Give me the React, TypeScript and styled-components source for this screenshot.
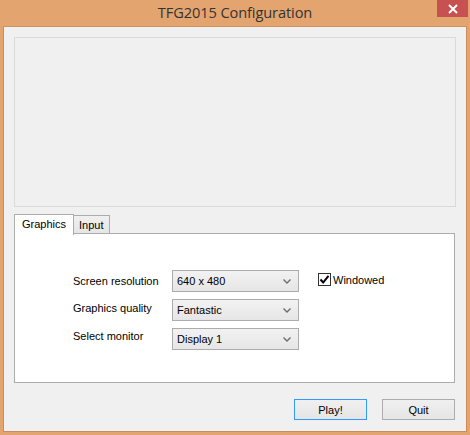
import React from "react";
import styled, { createGlobalStyle } from "styled-components";

const Global = createGlobalStyle`
  html, body { margin: 0; padding: 0; background: #E3A46F; }
  * { box-sizing: border-box; }
`;

const Window = styled.div`
  width: 470px;
  height: 435px;
  background: #E3A46F;
  display: flex;
  flex-direction: column;
  font-family: "Liberation Sans", Arial, sans-serif;
`;

const TitleBar = styled.div`
  height: 26px;
  flex: none;
  display: flex;
  align-items: flex-start;
  justify-content: center;
  position: relative;
`;

const Title = styled.div`
  font-family: "Open Sans", "Noto Sans", sans-serif;
  font-size: 14.6px;
  color: #333333;
  line-height: 22px;
  padding-top: 1px;
  letter-spacing: -0.1px;
`;

const CloseBtn = styled.div`
  position: absolute;
  top: 0;
  right: 2px;
  width: 31px;
  height: 17px;
  background: #C75050;
  display: flex;
  align-items: center;
  justify-content: center;
`;

const Client = styled.div`
  flex: 1;
  margin: 0 3px 3px 3px;
  background: #F0F0F0;
  border: 1px solid #C98C5A;
  border-top-color: #D0925F;
  display: flex;
  flex-direction: column;
  padding: 10px 10px 0 10px;
`;

const Preview = styled.div`
  height: 170px;
  border: 1px solid #DADADA;
  background: #F0F0F0;
  flex: none;
`;

const TabStrip = styled.div`
  margin-top: 6px;
  height: 21px;
  display: flex;
  align-items: flex-end;
  position: relative;
  z-index: 1;
`;

const Tab = styled.div<{ $active?: boolean }>`
  height: ${(p) => (p.$active ? 21 : 19)}px;
  padding: 0 ${(p) => (p.$active ? 7 : 5)}px;
  margin-left: ${(p) => (p.$active ? 0 : -1)}px;
  border: 1px solid #ACACAC;
  border-bottom: ${(p) => (p.$active ? "none" : "1px solid #ACACAC")};
  background: ${(p) => (p.$active ? "#FFFFFF" : "linear-gradient(#F0F0F0, #E5E5E5)")};
  font-size: 11px;
  color: #000;
  display: flex;
  align-items: ${(p) => (p.$active ? "flex-start" : "center")};
  padding-top: ${(p) => (p.$active ? 3 : 1)}px;
  margin-bottom: ${(p) => (p.$active ? -1 : 0)}px;
  position: relative;
  z-index: ${(p) => (p.$active ? 2 : 1)};
`;

const TabPage = styled.div`
  height: 150px;
  width: 441px;
  background: #FFFFFF;
  border: 1px solid #ACACAC;
  margin-top: -1px;
  padding: 36px 0 0 58px;
`;

const FormGrid = styled.div`
  display: grid;
  grid-template-columns: 99px 127px auto;
  grid-auto-rows: 21px;
  row-gap: 8px;
  column-gap: 0;
  align-items: center;
`;

const Label = styled.div<{ $dy?: number }>`
  font-size: 11px;
  color: #000;
  margin-top: ${(p) => p.$dy ?? 0}px;
`;

const Combo = styled.div`
  height: 22px;
  border: 1px solid #ACACAC;
  background: linear-gradient(#F2F2F2, #E6E6E6);
  display: flex;
  align-items: center;
  justify-content: space-between;
  padding: 1px 7px 0 4px;
  font-size: 11px;
  color: #000;
`;

const CheckWrap = styled.label`
  display: flex;
  align-items: center;
  gap: 2px;
  margin-left: 19px;
  font-size: 11px;
  color: #000;
  align-self: start;
  margin-top: 3px;
`;

const Box = styled.div`
  width: 13px;
  height: 13px;
  border: 1px solid #333;
  background: #fff;
  display: flex;
  align-items: center;
  justify-content: center;
`;

const ButtonRow = styled.div`
  margin-top: 16px;
  display: flex;
  justify-content: flex-end;
  gap: 15px;
  padding-right: 1px;
`;

const Button = styled.div<{ $focused?: boolean }>`
  width: 73px;
  height: 21px;
  border: 1px solid ${(p) => (p.$focused ? "#3399FF" : "#ACACAC")};
  background: linear-gradient(#F0F0F0, #E5E5E5);
  font-size: 11px;
  color: #000;
  display: flex;
  align-items: center;
  justify-content: center;
`;

const Chevron = () => (
  <svg width="8" height="5" viewBox="0 0 8 5">
    <path d="M0.5 0.5 L4 4 L7.5 0.5" stroke="#6d6d6d" strokeWidth="1.4" fill="none" />
  </svg>
);

const ComboBox = ({ value }: { value: string }) => (
  <Combo>
    <span>{value}</span>
    <Chevron />
  </Combo>
);

export default function App() {
  return (
    <>
      <Global />
      <Window>
        <TitleBar>
          <Title>TFG2015 Configuration</Title>
          <CloseBtn>
            <svg width="10" height="10" viewBox="0 0 10 10">
              <path d="M1 1 L9 9 M9 1 L1 9" stroke="#fff" strokeWidth="2" />
            </svg>
          </CloseBtn>
        </TitleBar>
        <Client>
          <Preview />
          <TabStrip>
            <Tab $active>Graphics</Tab>
            <Tab>Input</Tab>
          </TabStrip>
          <TabPage>
            <FormGrid>
              <Label>Screen resolution</Label>
              <ComboBox value="640 x 480" />
              <CheckWrap>
                <Box>
                  <svg width="11" height="11" viewBox="0 0 11 11">
                    <path d="M1.5 5.5 L4.2 8.5 L9.5 1.8" stroke="#000" strokeWidth="2" fill="none" />
                  </svg>
                </Box>
                Windowed
              </CheckWrap>
              <Label $dy={-4}>Graphics quality</Label>
              <ComboBox value="Fantastic" />
              <span />
              <Label $dy={-6}>Select monitor</Label>
              <ComboBox value="Display 1" />
              <span />
            </FormGrid>
          </TabPage>
          <ButtonRow>
            <Button $focused>Play!</Button>
            <Button>Quit</Button>
          </ButtonRow>
        </Client>
      </Window>
    </>
  );
}
